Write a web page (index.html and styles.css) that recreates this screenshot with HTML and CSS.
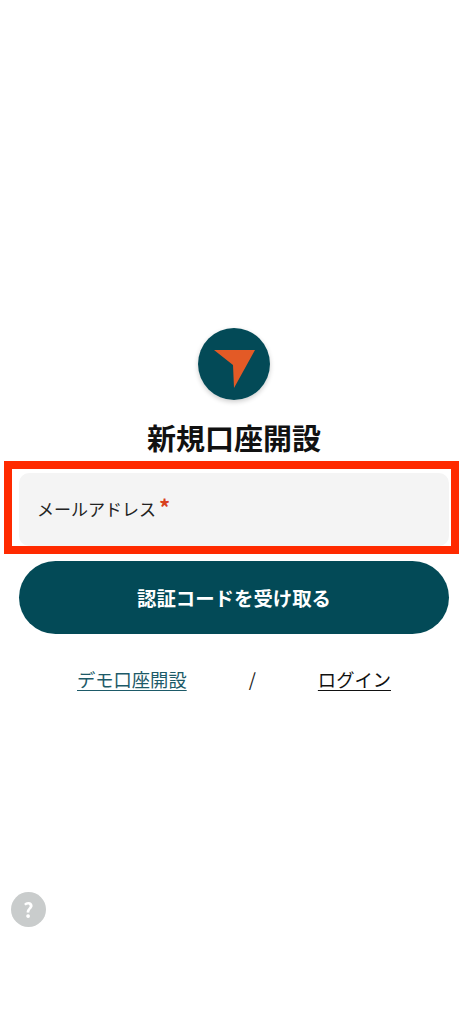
FILE: index.html
```html
<!DOCTYPE html>
<html lang="ja">
<head>
<meta charset="utf-8">
<title>新規口座開設</title>
<link rel="stylesheet" href="styles.css">
</head>
<body>
<div class="page">
  <div class="logo">
    <svg width="72" height="72" viewBox="0 0 72 72">
      <circle cx="36" cy="36" r="36" fill="#034a57"/>
      <polygon points="16,22 57,22 36,60 35,37" fill="#e35a26"/>
    </svg>
  </div>
  <h1 class="title">新規口座開設</h1>
  <div class="field-wrap">
    <div class="field">
      <span class="field-label">メールアドレス</span><span class="required">*</span>
    </div>
    <div class="highlight"></div>
  </div>
  <button class="submit-btn">認証コードを受け取る</button>
  <div class="links">
    <a class="link link-demo" href="#">デモ口座開設</a>
    <span class="slash">/</span>
    <a class="link link-login" href="#">ログイン</a>
  </div>
</div>
<div class="help-btn">?</div>
</body>
</html>
```

FILE: styles.css
```css
body {
    margin: 0;
    background-color: #fff;
    font-family: "Noto Sans CJK JP", "Noto Sans", sans-serif;
    color: #111;
}
.page {
    display: flex;
    flex-direction: column;
    align-items: center;
    box-sizing: border-box;
    height: 1024px;
    padding: 328px 21px 0 19px;
}
.logo {
    width: 72px;
    height: 72px;
    border-radius: 50%;
    box-shadow: 0 2px 5px rgba(0, 0, 0, 0.2);
}
.title {
    margin: 17px 0 0;
    font-size: 29px;
    line-height: 40px;
    font-weight: 700;
    color: #111;
}
.field-wrap {
    position: relative;
    width: 100%;
    margin-top: 16px;
}
.field {
    display: flex;
    align-items: flex-start;
    box-sizing: border-box;
    height: 73px;
    padding: 23px 18px 0 19px;
    background-color: #f4f4f4;
    border-radius: 10px;
}
.field-label {
    margin-left: -1px;
    font-size: 17px;
    line-height: 25px;
    color: #222;
}
.required {
    margin-left: 3px;
    font-size: 22px;
    font-weight: 700;
    line-height: 20px;
    color: #d8401c;
}
.highlight {
    position: absolute;
    top: -12px;
    left: -15.5px;
    right: -10px;
    bottom: -8px;
    border: 8px solid #ff2a00;
    box-sizing: border-box;
}
.submit-btn {
    width: 100%;
    height: 73px;
    margin-top: 15px;
    border: none;
    border-radius: 37px;
    background-color: #034a57;
    color: #fff;
    font-family: inherit;
    font-size: 19.4px;
    font-weight: 700;
}
.links {
    display: flex;
    justify-content: space-between;
    align-items: center;
    box-sizing: border-box;
    width: 100%;
    margin-top: 31px;
    padding: 0 58px;
    font-size: 18.3px;
    line-height: 28px;
}
.link {
    text-decoration: underline;
    text-underline-offset: 3px;
}
.link-demo {
    color: #1d5a68;
}
.link-login {
    color: #111;
}
.slash {
    color: #222;
}
.help-btn {
    position: fixed;
    left: 11px;
    top: 892px;
    width: 35px;
    height: 35px;
    border-radius: 50%;
    background-color: #c9cccc;
    color: #fff;
    font-size: 20px;
    font-weight: 700;
    line-height: 35px;
    text-align: center;
}
```
